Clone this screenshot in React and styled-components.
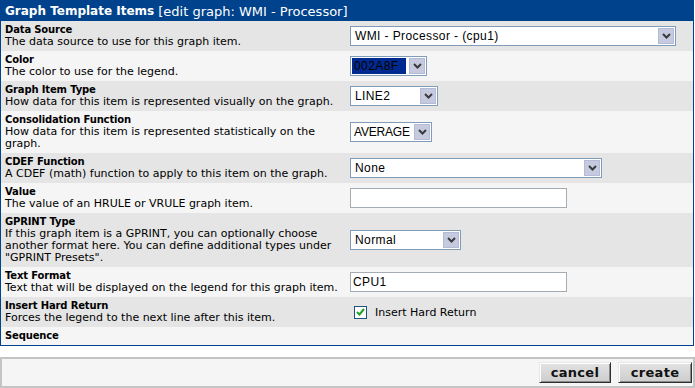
import React from 'react'
import styled, { createGlobalStyle } from 'styled-components'

const GlobalStyle = createGlobalStyle`
    body {
        margin: 0;
        background: #fff;
        font-family: "DejaVu Sans", Verdana, sans-serif;
    }
`;

const Panel = styled.div`
    width: 694px;
    box-sizing: border-box;
    border: 1px solid #00438C;
`;

const Header = styled.div`
    height: 20px;
    background: #00438C;
    color: #fff;
    padding: 0 4px;
    display: flex;
    align-items: center;
    font-size: 13px;
    white-space: nowrap;
    b {
        font-size: 12px;
        margin-right: 4px;
    }
`;

const Row = styled.div`
    display: grid;
    grid-template-columns: 345px 1fr;
    background: ${p => p.$dark ? '#E5E5E5' : '#F5F5F5'};
`;

const Label = styled.div`
    padding: 3px 0 3px 4px;
    font-size: 11px;
    line-height: 12px;
    color: #000;
    b {
        display: block;
        font-size: 10px;
        letter-spacing: -0.15px;
    }
`;

const Field = styled.div`
    display: flex;
    align-items: center;
    padding-left: 4px;
`;

const SelectBox = styled.div`
    display: inline-flex;
    align-items: stretch;
    box-sizing: border-box;
    width: ${p => p.$w}px;
    height: 20px;
    padding: 1px;
    border: 1px solid #7F9DB9;
    background: #fff;
`;

const SelectValue = styled.span`
    flex: 1;
    min-width: 0;
    display: flex;
    align-items: center;
    padding-left: ${p => p.$tight ? '2px' : '3px'};
    font-family: "Liberation Sans", Arial, sans-serif;
    font-size: 12px;
    letter-spacing: ${p => p.$tight ? '-0.2px' : '0.4px'};
    color: #000;
    white-space: nowrap;
    overflow: hidden;
`;

const Highlight = styled.span`
    display: flex;
    align-items: center;
    width: 52px;
    margin-right: 3px;
    padding-left: 2px;
    background: ${p => p.$color};
    font-family: "Liberation Sans", Arial, sans-serif;
    font-size: 12px;
    letter-spacing: 0.4px;
    color: #000;
`;

const Arrow = styled.span`
    flex-shrink: 0;
    width: 16px;
    box-sizing: border-box;
    display: flex;
    align-items: center;
    justify-content: center;
    background: #C6CADF;
    border: 1px solid #B3BBD6;
`;

const TextInput = styled.input`
    box-sizing: border-box;
    width: 217px;
    height: 20px;
    border: 1px solid #A5ACB2;
    background: #fff;
    padding: 0 2px;
    font-family: "Liberation Sans", Arial, sans-serif;
    font-size: 12px;
    letter-spacing: 0.4px;
    color: #000;
    outline: none;
`;

const CheckLabel = styled.label`
    display: flex;
    align-items: center;
    margin-left: 4px;
    font-size: 11px;
    color: #000;
`;

const CheckBox = styled.span`
    width: 13px;
    height: 13px;
    box-sizing: border-box;
    border: 1px solid #1C5180;
    background: #fff;
    display: flex;
    align-items: center;
    justify-content: center;
    margin-right: 8px;
`;

const ButtonBar = styled.div`
    margin-top: 11px;
    height: 31px;
    box-sizing: border-box;
    border: 2px solid #C4C4C4;
    background: #F5F5F5;
    display: flex;
    justify-content: flex-end;
    align-items: center;
    gap: 7px;
    padding-right: 1px;
`;

const Button = styled.button`
    height: 21px;
    width: ${p => p.$w}px;
    box-sizing: border-box;
    border: 1px solid;
    border-color: #E8E8E8 #2E2E2E #2E2E2E #E8E8E8;
    box-shadow: inset 1px 1px 0 #fff, inset -1px -1px 0 #8A8A8A;
    background: linear-gradient(#E2E2E2, #CDCDCD);
    font-family: "DejaVu Sans", Verdana, sans-serif;
    font-weight: bold;
    font-size: 13px;
    letter-spacing: 0.3px;
    color: #111;
    padding: 0;
    cursor: pointer;
`;

const Chevron = () => (
    <svg width="9" height="6" viewBox="0 0 9 6">
        <path d="M1 1 L4.5 4.5 L8 1" fill="none" stroke="#3A3A3A" strokeWidth="2" />
    </svg>
)

const Select = ({ w, value, tight }) => (
    <SelectBox $w={w}>
        <SelectValue $tight={tight}>{value}</SelectValue>
        <Arrow><Chevron /></Arrow>
    </SelectBox>
)

const items = [
    { title: 'Data Source', desc: 'The data source to use for this graph item.', field: <Select w={326} value="WMI - Processor - (cpu1)" /> },
    {
        title: 'Color', desc: 'The color to use for the legend.', field: (
            <SelectBox $w={77}>
                <Highlight $color="#002A8F">002A8F</Highlight>
                <Arrow><Chevron /></Arrow>
            </SelectBox>
        )
    },
    { title: 'Graph Item Type', desc: 'How data for this item is represented visually on the graph.', field: <Select w={88} value="LINE2" /> },
    { title: 'Consolidation Function', desc: 'How data for this item is represented statistically on the graph.', field: <Select w={82} value="AVERAGE" tight /> },
    { title: 'CDEF Function', desc: 'A CDEF (math) function to apply to this item on the graph.', field: <Select w={252} value="None" /> },
    { title: 'Value', desc: 'The value of an HRULE or VRULE graph item.', field: <TextInput defaultValue="" /> },
    { title: 'GPRINT Type', desc: 'If this graph item is a GPRINT, you can optionally choose another format here. You can define additional types under "GPRINT Presets".', field: <Select w={111} value="Normal" /> },
    { title: 'Text Format', desc: 'Text that will be displayed on the legend for this graph item.', field: <TextInput defaultValue="CPU1" /> },
    {
        title: 'Insert Hard Return', desc: 'Forces the legend to the next line after this item.', field: (
            <CheckLabel>
                <CheckBox>
                    <svg width="9" height="8" viewBox="0 0 9 8">
                        <path d="M1 4 L3.5 6.5 L8 1" fill="none" stroke="#21A121" strokeWidth="2" />
                    </svg>
                </CheckBox>
                Insert Hard Return
            </CheckLabel>
        )
    },
    { title: 'Sequence', desc: null, field: null },
]

export default function App() {
    return (
        <>
            <GlobalStyle />
            <Panel>
                <Header>
                    <b>Graph Template Items</b>[edit graph: WMI - Processor]
                </Header>
                {items.map((item, i) => (
                    <Row key={item.title} $dark={i % 2 === 0}>
                        <Label>
                            <b>{item.title}</b>
                            {item.desc}
                        </Label>
                        <Field>{item.field}</Field>
                    </Row>
                ))}
            </Panel>
            <ButtonBar>
                <Button $w={72}>cancel</Button>
                <Button $w={74}>create</Button>
            </ButtonBar>
        </>
    )
}
